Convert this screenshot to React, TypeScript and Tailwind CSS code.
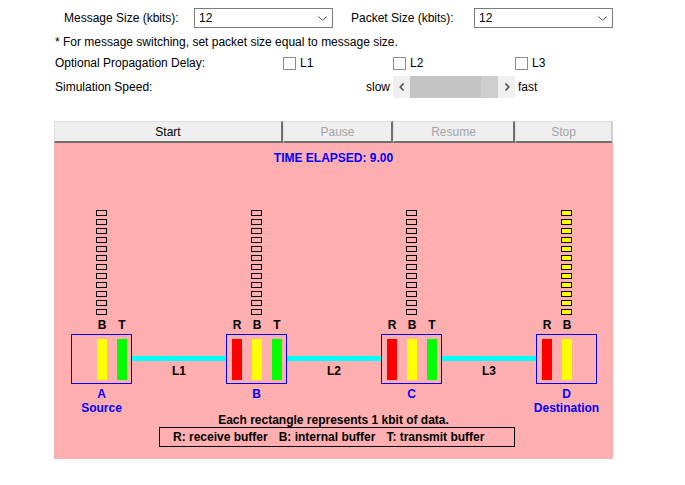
import React from "react"

type Slot = "R" | "B" | "T"

const nodes = [
  { name: "A", sub: "Source", slots: ["B", "T"] as Slot[], full: false },
  { name: "B", sub: "", slots: ["R", "B", "T"] as Slot[], full: false },
  { name: "C", sub: "", slots: ["R", "B", "T"] as Slot[], full: false },
  { name: "D", sub: "Destination", slots: ["R", "B"] as Slot[], full: true },
]

const barColor: Record<Slot, string> = {
  R: "bg-[#ff0000]",
  B: "bg-[#ffff00]",
  T: "bg-[#00ff00]",
}

function Select() {
  return (
    <div className="w-[139px] h-[20px] border border-[#7a7a7a] bg-white flex items-center justify-between pl-[4px] pr-[5px]">
      <span>12</span>
      <svg width="9" height="5" viewBox="0 0 9 5">
        <path d="M0.5 0.5 L4.5 4.5 L8.5 0.5" fill="none" stroke="#555" strokeWidth="1" />
      </svg>
    </div>
  )
}

function Check({ label }: { label: string }) {
  return (
    <div className="flex items-center gap-[4px]">
      <div className="w-[13px] h-[13px] border border-[#8e8e8e] bg-white" />
      <span>{label}</span>
    </div>
  )
}

function Node({ n }: { n: (typeof nodes)[number] }) {
  const all: Slot[] = ["R", "B", "T"]
  return (
    <div className="w-[61px] flex flex-col">
      <div className="flex flex-col gap-[3px] pl-[25px]">
        {Array.from({ length: 12 }).map((_, i) => (
          <div
            key={i}
            className={`w-[11px] h-[6px] border border-black ${n.full ? "bg-[#ffff00]" : ""}`}
          />
        ))}
      </div>
      <div className="h-[19px] flex items-center pl-[6px] gap-[10px]">
        {all.map((s) => (
          <span key={s} className={`w-[10px] text-center leading-[14px] ${n.slots.includes(s) ? "" : "invisible"}`}>
            {s}
          </span>
        ))}
      </div>
      <div className="h-[50px] border border-[#0000ff] flex pt-[4px] pl-[5px] gap-[10px]">
        {all.map((s) => (
          <div key={s} className={`w-[10px] h-[41px] ${n.slots.includes(s) ? barColor[s] : ""}`} />
        ))}
      </div>
      <div className="mt-[3px] flex flex-col items-center text-[#0000ff] leading-[14px]">
        <span>{n.name}</span>
        {n.sub && <span className="whitespace-nowrap">{n.sub}</span>}
      </div>
    </div>
  )
}

function Link({ label }: { label: string }) {
  return (
    <div className="w-[94px] mt-[146px] flex flex-col items-center">
      <div className="w-full h-[5px] bg-[#00ffff]" />
      <span className="mt-[3px] leading-[14px]">{label}</span>
    </div>
  )
}

export default function App() {
  return (
    <div className="w-[685px] h-[485px] bg-white text-black text-[12px] font-['Liberation_Sans',Arial,sans-serif] overflow-hidden">
      <div className="pt-[8px] flex h-[28px] items-center">
        <div className="ml-[64px] w-[130px]">Message Size (kbits):</div>
        <Select />
        <div className="ml-[18px] w-[123px]">Packet Size (kbits):</div>
        <Select />
      </div>
      <div className="mt-[6px] h-[16px] leading-[16px] pl-[55px]">
        * For message switching, set packet size equal to message size.
      </div>
      <div className="mt-[5px] h-[16px] flex items-center pl-[55px]">
        <div className="w-[228px]">Optional Propagation Delay:</div>
        <div className="w-[110px]"><Check label="L1" /></div>
        <div className="w-[122px]"><Check label="L2" /></div>
        <Check label="L3" />
      </div>
      <div className="mt-[5px] h-[22px] flex items-center pl-[55px]">
        <div className="w-[338px] flex justify-between pr-[3px]">
          <span>Simulation Speed:</span>
          <span>slow</span>
        </div>
        <div className="w-[122px] h-[22px] flex bg-[#f0f0f0]">
          <div className="w-[17px] flex items-center justify-center">
            <svg width="6" height="8" viewBox="0 0 6 8">
              <path d="M4.5 0.5 L1.2 4 L4.5 7.5" fill="none" stroke="#505050" strokeWidth="1.6" />
            </svg>
          </div>
          <div className="w-[71px] bg-[#c4c4c4]" />
          <div className="w-[17px] bg-[#cdcdcd]" />
          <div className="w-[17px] flex items-center justify-center">
            <svg width="6" height="8" viewBox="0 0 6 8">
              <path d="M1.5 0.5 L4.8 4 L1.5 7.5" fill="none" stroke="#505050" strokeWidth="1.6" />
            </svg>
          </div>
        </div>
        <span className="ml-[3px]">fast</span>
      </div>
      <div className="mt-[23px] ml-[54px] w-[559px] h-[22px] flex">
        <div className="w-[229px] bg-[#efefef] border-t border-l border-[#dedede] border-r-2 border-r-[#707070] border-b-2 border-b-[#707070] flex items-center justify-center">Start</div>
        <div className="w-[110px] bg-[#efefef] border-t border-l border-[#dedede] border-r-2 border-r-[#707070] border-b-2 border-b-[#707070] flex items-center justify-center text-[#a3a3a3]">Pause</div>
        <div className="w-[122px] bg-[#efefef] border-t border-l border-[#dedede] border-r-2 border-r-[#707070] border-b-2 border-b-[#707070] flex items-center justify-center text-[#a3a3a3]">Resume</div>
        <div className="w-[98px] bg-[#efefef] border-t border-l border-[#dedede] border-r-2 border-r-[#d0d0d0] border-b-2 border-b-[#707070] flex items-center justify-center text-[#a3a3a3]">Stop</div>
      </div>
      <div className="ml-[54px] w-[559px] h-[316px] bg-[#ffafaf] font-bold flex flex-col">
        <div className="pt-[7px] leading-[16px] text-center text-[#0000ff]">TIME ELAPSED: 9.00</div>
        <div className="mt-[44px] pl-[17px] flex items-start h-[203px]">
          <Node n={nodes[0]} />
          <Link label="L1" />
          <Node n={nodes[1]} />
          <Link label="L2" />
          <Node n={nodes[2]} />
          <Link label="L3" />
          <Node n={nodes[3]} />
        </div>
        <div className="leading-[14px] text-center">Each rectangle represents 1 kbit of data.</div>
        <div className="ml-[105px] w-[356px] h-[20px] border border-black flex items-center pl-[13px] gap-[11px]">
          <span>R: receive buffer</span>
          <span>B: internal buffer</span>
          <span>T: transmit buffer</span>
        </div>
      </div>
    </div>
  )
}
